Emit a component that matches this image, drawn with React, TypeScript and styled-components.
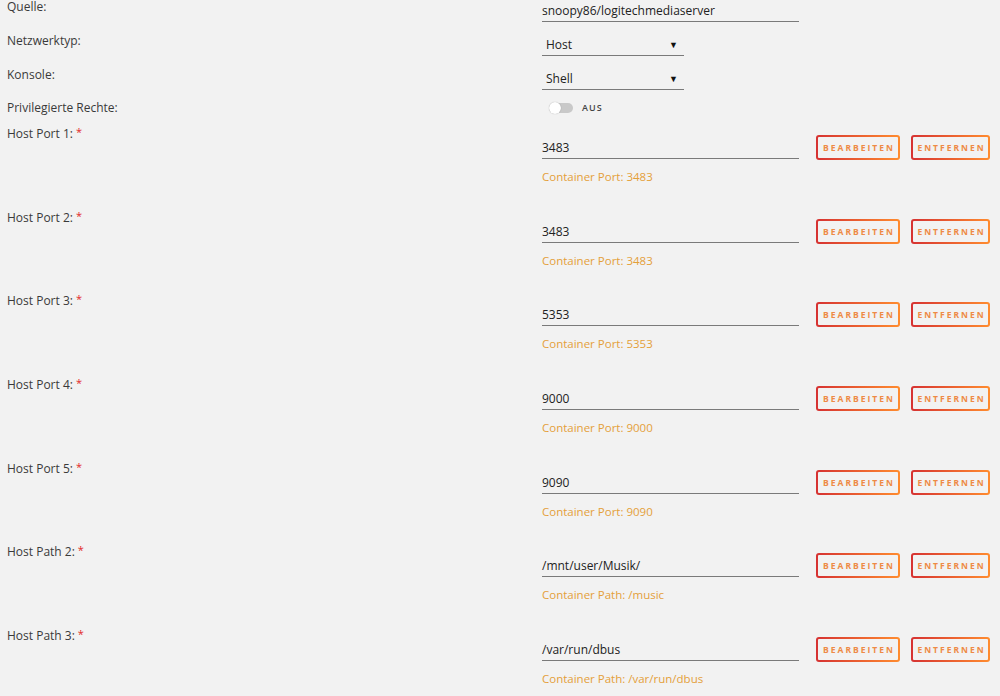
import React from "react";
import styled, { createGlobalStyle } from "styled-components";

const GlobalStyle = createGlobalStyle`
  html, body {
    margin: 0;
    padding: 0;
    background: #f2f2f2;
  }
  body {
    font-family: "Open Sans", "Liberation Sans", sans-serif;
    color: #333;
  }
`;

const Page = styled.div`
  width: 1000px;
  height: 696px;
  overflow: hidden;
  background: #f2f2f2;
`;

const Row = styled.div<{ $h: number }>`
  display: flex;
  align-items: flex-start;
  height: ${(p) => p.$h}px;
`;

const Label = styled.div`
  width: 542px;
  padding-left: 7px;
  box-sizing: border-box;
  font-size: 12px;
  line-height: 13px;
  color: #3a3a3a;
  flex-shrink: 0;
`;

const Required = styled.span`
  color: #e22828;
  font-size: 11px;
  vertical-align: 2px;
  margin-left: 3px;
`;

const FieldCol = styled.div<{ $pt: number }>`
  padding-top: ${(p) => p.$pt}px;
  display: flex;
  flex-direction: column;
`;

const TextInput = styled.div<{ $w: number }>`
  width: ${(p) => p.$w}px;
  height: 20px;
  box-sizing: content-box;
  border-bottom: 1px solid #7a7a7a;
  font-size: 12px;
  line-height: 20px;
  color: #222;
  white-space: nowrap;
`;

const Select = styled.div`
  width: 142px;
  height: 22px;
  border-bottom: 1px solid #7a7a7a;
  display: flex;
  align-items: center;
  justify-content: space-between;
  padding: 0 6px 0 4px;
  box-sizing: border-box;
  font-size: 12px;
  color: #222;
`;

const Arrow = styled.span`
  font-size: 9px;
  color: #111;
`;

const SwitchWrap = styled.div`
  display: flex;
  align-items: center;
  gap: 9px;
  padding-left: 7px;
`;

const Track = styled.div`
  width: 24px;
  height: 10px;
  border-radius: 5px;
  background: #c9c9c9;
  display: flex;
  align-items: center;
`;

const Knob = styled.div`
  width: 12px;
  height: 12px;
  border-radius: 50%;
  background: #fff;
  box-shadow: 0 0 1px rgba(0, 0, 0, 0.35);
`;

const SwitchText = styled.span`
  font-size: 9px;
  letter-spacing: 1px;
  font-weight: 600;
  color: #444;
`;

const Hint = styled.div`
  margin-top: 11px;
  font-size: 11.5px;
  line-height: 14px;
  color: #e4a03a;
`;

const Buttons = styled.div`
  display: flex;
  gap: 11px;
  margin-left: 17px;
  margin-top: 10px;
`;

const Button = styled.button<{ $w: number }>`
  width: ${(p) => p.$w}px;
  height: 25px;
  border: 2px solid transparent;
  border-radius: 3px;
  background: linear-gradient(#f2f2f2, #f2f2f2) padding-box,
    linear-gradient(90deg, #d63232, #ff8c2f) border-box;
  color: #ee8a45;
  font-family: "Open Sans", "Liberation Sans", sans-serif;
  font-size: 8.5px;
  font-weight: 700;
  letter-spacing: 2px;
  padding: 0 0 0 2px;
  cursor: pointer;
`;

const mappings = [
  { label: "Host Port 1:", value: "3483", hint: "Container Port: 3483" },
  { label: "Host Port 2:", value: "3483", hint: "Container Port: 3483" },
  { label: "Host Port 3:", value: "5353", hint: "Container Port: 5353" },
  { label: "Host Port 4:", value: "9000", hint: "Container Port: 9000" },
  { label: "Host Port 5:", value: "9090", hint: "Container Port: 9090" },
  { label: "Host Path 2:", value: "/mnt/user/Musik/", hint: "Container Path: /music" },
  { label: "Host Path 3:", value: "/var/run/dbus", hint: "Container Path: /var/run/dbus" },
];

export default function App() {
  return (
    <Page>
      <GlobalStyle />
      <Row $h={34}>
        <Label>Quelle:</Label>
        <FieldCol $pt={1}>
          <TextInput $w={257}>snoopy86/logitechmediaserver</TextInput>
        </FieldCol>
      </Row>
      <Row $h={34}>
        <Label>Netzwerktyp:</Label>
        <FieldCol $pt={0}>
          <Select>
            Host <Arrow>▼</Arrow>
          </Select>
        </FieldCol>
      </Row>
      <Row $h={33}>
        <Label>Konsole:</Label>
        <FieldCol $pt={0}>
          <Select>
            Shell <Arrow>▼</Arrow>
          </Select>
        </FieldCol>
      </Row>
      <Row $h={24}>
        <Label>Privilegierte Rechte:</Label>
        <FieldCol $pt={0}>
          <SwitchWrap>
            <Track>
              <Knob />
            </Track>
            <SwitchText>AUS</SwitchText>
          </SwitchWrap>
        </FieldCol>
      </Row>
      {mappings.map((m, i) => (
        <Row $h={83.67} key={i}>
          <Label>
            {m.label}
            <Required>*</Required>
          </Label>
          <FieldCol $pt={13}>
            <TextInput $w={257}>{m.value}</TextInput>
            <Hint>{m.hint}</Hint>
          </FieldCol>
          <Buttons>
            <Button $w={84}>BEARBEITEN</Button>
            <Button $w={79}>ENTFERNEN</Button>
          </Buttons>
        </Row>
      ))}
    </Page>
  );
}
